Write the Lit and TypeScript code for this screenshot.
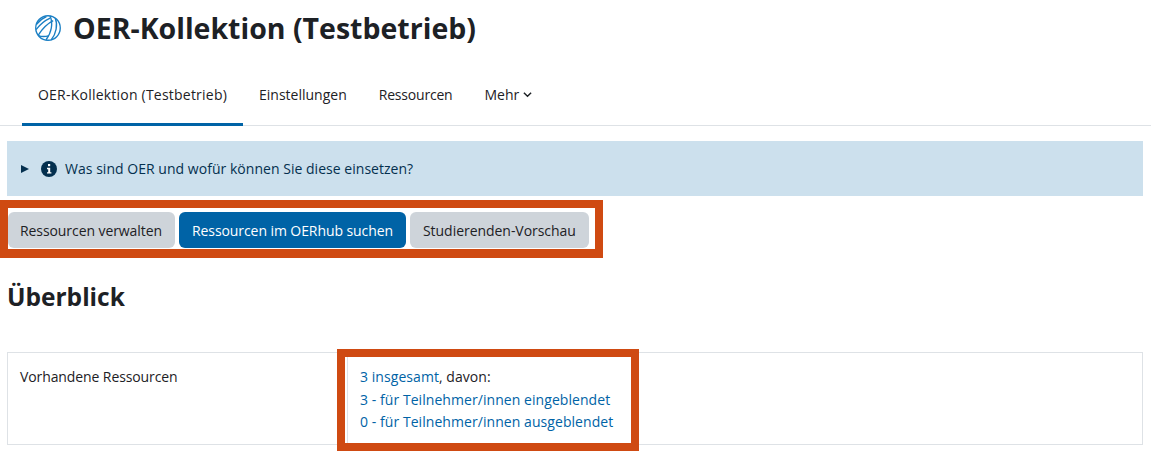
import { LitElement, css, html } from 'lit'
import { customElement } from 'lit/decorators.js'

@customElement('app-root')
export class AppRoot extends LitElement {
  static styles = css`
    :host {
      display: block;
      position: relative;
      height: 467px;
      overflow: hidden;
      background: #fff;
      color: #1d2125;
      font-family: "Open Sans", "Noto Sans", sans-serif;
      font-size: 14px;
    }

    .header {
      display: flex;
      align-items: center;
      gap: 12px;
      height: 57px;
      padding: 0 0 0 35px;
      box-sizing: border-box;
    }

    .header svg {
      width: 26px;
      height: 26px;
      flex: none;
      margin-top: -2px;
    }

    h1 {
      margin: 0;
      font-size: 28.5px;
      font-weight: 700;
      line-height: 1;
    }

    .tabs {
      display: flex;
      height: 69px;
      padding: 8px 0 0 22px;
      border-bottom: 1px solid #dee2e6;
      box-sizing: border-box;
    }

    .tab {
      display: flex;
      align-items: center;
      gap: 4px;
      padding: 0 16px;
      border-bottom: 3px solid transparent;
      margin-bottom: -1px;
      box-sizing: border-box;
    }

    .tab.active {
      border-color: #0063a6;
      letter-spacing: 0.22px;
    }

    .tab.tight {
      letter-spacing: -0.2px;
    }

    .tab svg {
      width: 9px;
      height: 9px;
    }

    .alert {
      display: flex;
      align-items: center;
      gap: 6px;
      height: 55px;
      margin: 15px 8px 0 7px;
      padding-left: 14px;
      background: #cce0ed;
      color: #04304f;
      letter-spacing: 0.03px;
    }

    .arrow {
      width: 0;
      height: 0;
      margin-right: 6px;
      border-left: 8px solid #04304f;
      border-top: 4px solid transparent;
      border-bottom: 4px solid transparent;
    }

    .alert svg {
      width: 16px;
      height: 16px;
      margin-right: 2px;
    }

    .actions {
      display: inline-flex;
      gap: 4px;
      margin-top: 4px;
      padding: 4px 6px 1px 0;
      border: 8px solid #cf4a12;
      border-bottom-width: 9px;
      vertical-align: top;
    }

    .btn {
      height: 36px;
      padding: 0 13px;
      border: 0;
      border-radius: 6px;
      background: #ced4da;
      color: #1d2125;
      font: inherit;
      letter-spacing: -0.08px;
    }

    .btn:first-child {
      padding: 0 13px 0 12px;
    }

    .btn:last-child {
      letter-spacing: -0.04px;
    }

    .btn.primary {
      background: #0063a6;
      color: #fff;
    }

    h2 {
      margin: 24px 0 0 7px;
      font-size: 24.5px;
      font-weight: 700;
      line-height: 30px;
    }

    .table {
      display: grid;
      grid-template-columns: 339px 1fr;
      height: 93px;
      margin: 40px 8px 0 7px;
      border: 1px solid #dee2e6;
      box-sizing: border-box;
      letter-spacing: -0.1px;
    }

    .cell {
      padding: 13px 12px;
      line-height: 22.5px;
    }

    .cell + .cell {
      border-left: 1px solid #dee2e6;
      letter-spacing: 0.06px;
    }

    a {
      color: #0063a6;
      text-decoration: none;
    }

    .mark {
      position: absolute;
      left: 337px;
      top: 349px;
      width: 302px;
      height: 102px;
      box-sizing: border-box;
      border: 8px solid #cf4a12;
    }
  `

  render() {
    return html`
      <div class="header">
        <svg viewBox="0 0 25 25" fill="none" stroke="#1a7fc4" stroke-width="1.3">
          <circle cx="12.500" cy="12.500" r="11.800"></circle>
          <path d="M1.500 9C4 5.500 7.500 3 11 1.500"></path>
          <path d="M1 14C4.500 9.500 9 5.500 14.500 3"></path>
          <path d="M3 19.500C7 13.500 11.500 8.500 17.500 5.500"></path>
          <path d="M14.500 1C17.500 8 16 17 10.500 24"></path>
          <path d="M19.500 3C22 9 20.500 18 15.500 24"></path>
          <path d="M3 19.500C6 21 9.500 21 13 20"></path>
        </svg>
        <h1>OER-Kollektion (Testbetrieb)</h1>
      </div>
      <nav class="tabs">
        <div class="tab active">OER-Kollektion (Testbetrieb)</div>
        <div class="tab">Einstellungen</div>
        <div class="tab tight">Ressourcen</div>
        <div class="tab">
          Mehr
          <svg viewBox="0 0 10 10" fill="none" stroke="#1d2125" stroke-width="1.600">
            <path d="M1 3l4 4 4-4"></path>
          </svg>
        </div>
      </nav>
      <div class="alert">
        <span class="arrow"></span>
        <svg viewBox="0 0 16 16">
          <circle cx="8" cy="8" r="8" fill="#04304f"></circle>
          <rect x="7" y="3" width="2.200" height="2.200" fill="#fff"></rect>
          <path d="M6 6.800h3.200v4.400H10.400v1.400H6v-1.400h1.200V8.200H6z" fill="#fff"></path>
        </svg>
        <span>Was sind OER und wofür können Sie diese einsetzen?</span>
      </div>
      <div class="actions">
        <button class="btn">Ressourcen verwalten</button>
        <button class="btn primary">Ressourcen im OERhub suchen</button>
        <button class="btn">Studierenden-Vorschau</button>
      </div>
      <h2>Überblick</h2>
      <div class="table">
        <div class="cell">Vorhandene Ressourcen</div>
        <div class="cell">
          <a href="#">3 insgesamt</a>, davon:<br />
          <a href="#">3 - für Teilnehmer/innen eingeblendet</a><br />
          <a href="#">0 - für Teilnehmer/innen ausgeblendet</a>
        </div>
      </div>
      <div class="mark"></div>
    `
  }
}
